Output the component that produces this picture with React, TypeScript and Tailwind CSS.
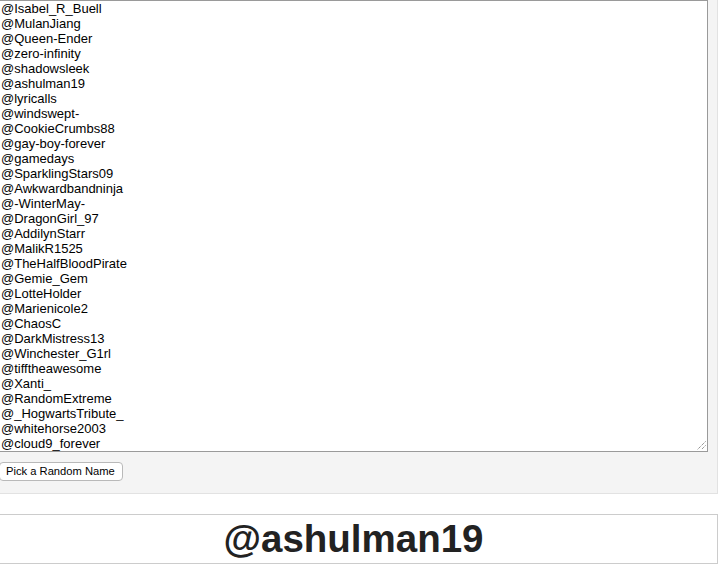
const NAMES = [
  '@Isabel_R_Buell',
  '@MulanJiang',
  '@Queen-Ender',
  '@zero-infinity',
  '@shadowsleek',
  '@ashulman19',
  '@lyricalls',
  '@windswept-',
  '@CookieCrumbs88',
  '@gay-boy-forever',
  '@gamedays',
  '@SparklingStars09',
  '@Awkwardbandninja',
  '@-WinterMay-',
  '@DragonGirl_97',
  '@AddilynStarr',
  '@MalikR1525',
  '@TheHalfBloodPirate',
  '@Gemie_Gem',
  '@LotteHolder',
  '@Marienicole2',
  '@ChaosC',
  '@DarkMistress13',
  '@Winchester_G1rl',
  '@tifftheawesome',
  '@Xanti_',
  '@RandomExtreme',
  '@_HogwartsTribute_',
  '@whitehorse2003',
  '@cloud9_forever',
]

function ResizeGrip() {
  return (
    <svg width="9" height="9" viewBox="0 0 9 9" className="absolute right-[1px] bottom-[1px]">
      <line x1="8.5" y1="0.5" x2="0.5" y2="8.5" stroke="#666" strokeWidth="1" strokeDasharray="1 1" />
      <line x1="8.5" y1="4.5" x2="4.5" y2="8.5" stroke="#666" strokeWidth="1" strokeDasharray="1 1" />
    </svg>
  )
}

export default function App() {
  return (
    <div className="w-[718px] font-['Liberation_Sans',Arial,sans-serif] bg-white">
      {/* name list panel */}
      <div className="h-[494px] bg-[#f4f4f4] border-r border-b border-[#e2e2e2]">
        <div className="relative -ml-[2px] w-[710px] h-[452px] bg-white border border-[#9a9a9a] pl-[2px] overflow-hidden">
          <div className="text-[13px] leading-[15px] text-black">
            {NAMES.map((n) => (
              <div key={n} className="whitespace-nowrap">{n}</div>
            ))}
          </div>
          <ResizeGrip />
        </div>
        <button className="mt-[10px] -ml-[1px] h-[19px] pl-[6px] pr-[7px] bg-white border border-[#b9b9b9] rounded-[4px] text-[11.2px] leading-[17px] text-black">
          Pick a Random Name
        </button>
      </div>

      {/* picked name */}
      <div className="mt-5 h-[50px] pr-[10px] border border-l-0 border-[#cccccc] flex items-center justify-center">
        <span className="text-[38.5px] leading-[48px] font-bold text-[#222]">@ashulman19</span>
      </div>
    </div>
  )
}
